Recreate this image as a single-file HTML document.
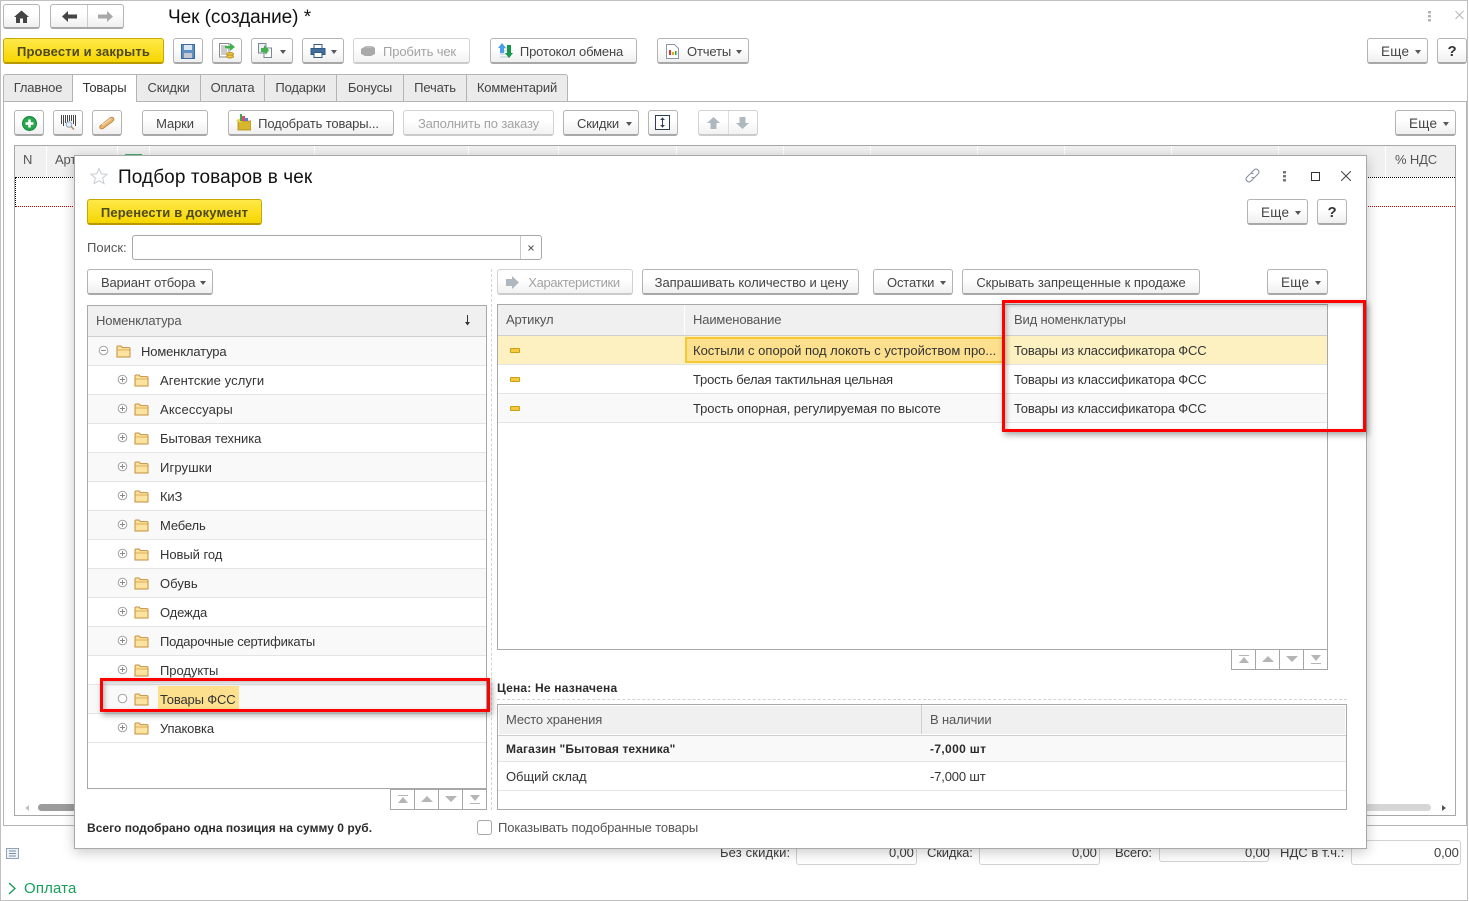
<!DOCTYPE html>
<html lang="ru"><head><meta charset="utf-8"><title>Чек (создание)</title>
<style>
html,body{margin:0;padding:0;background:#fff}
#p{position:relative;width:1469px;height:901px;overflow:hidden;background:#fff;font:13px/16px "Liberation Sans",Arial,sans-serif;color:#4a4a4a;letter-spacing:-.15px}
#p div,#p svg{position:absolute;box-sizing:border-box}
.t{white-space:nowrap;height:16px;color:#3c3c3c}
.d{color:#333}
.g{color:#a3a3a3}
.b{font-weight:bold;color:#2b2b2b;font-size:12px;letter-spacing:0}
.btn{height:26px;border:1px solid #b4b4b4;border-bottom:2px solid #a8a8a8;border-radius:3px;background:linear-gradient(#fff 40%,#efefef);text-align:center;line-height:25px;white-space:nowrap;color:#444}
.dis{border-color:#d2d2d2;border-bottom-color:#cbcbcb;color:#a3a3a3;background:linear-gradient(#fff 40%,#f2f2f2)}
.y{height:26px;border:1px solid #c9a800;border-bottom:2px solid #b89a00;border-radius:3px;background:linear-gradient(#ffe94a,#f6d600);font-weight:bold;color:#4f4a1e;text-align:center;line-height:25px;white-space:nowrap;letter-spacing:.15px}
.ar{width:0;height:0;border:3.5px solid transparent;border-top:4px solid #555;border-bottom:0}
.tab{top:74px;height:28px;background:#ebebeb;border:1px solid #b4b4b4;border-left:0;text-align:center;line-height:26px;color:#444}
.hc{background:#f0f0f0}
.rl{height:1px;background:#e4e4e4}
.pg{border:1px solid #a6a6a6;width:25px;height:21px}
.q{font-size:15px;font-weight:bold;color:#333}
</style></head><body><div id="p">
<svg width="0" height="0" style="position:absolute"><defs>
<symbol id="fo" viewBox="0 0 15 13"><path d="M1 12V2.200Q1 1 2.100 1H5.100L6.500 2.600H13Q14 2.600 14 3.600V12Z" fill="#fde3a0" stroke="#c58f3c"/><path d="M1.500 5H13.500" stroke="#e0ad55"/></symbol>
<symbol id="pl" viewBox="0 0 11 11"><circle cx="5.500" cy="5.500" r="4.300" fill="#fff" stroke="#a2a2a2"/><path d="M3 5.500H8M5.500 3V8" stroke="#8a8a8a"/></symbol>
<symbol id="it" viewBox="0 0 10 5"><rect x=".5" y=".5" width="9" height="4" rx=".5" fill="#f5c93b" stroke="#c9a015"/></symbol>
</defs></svg>

<!-- outer frame -->
<div style="left:0;top:0;width:1468px;height:901px;border:1px solid #c0c0c0"></div>

<!-- top bar -->
<div class="btn" style="left:3px;top:4px;width:37px;height:25px"></div>
<svg style="left:14px;top:10px" width="15" height="13" viewBox="0 0 15 13"><path d="M7.500 .5L15 7H13V13H9V8.500H6V13H2V7H0Z" fill="#444"/></svg>
<div class="btn" style="left:50px;top:4px;width:74px;height:25px"></div>
<div style="left:87px;top:5px;width:1px;height:22px;background:#ccc"></div>
<svg style="left:62px;top:11px" width="15" height="11" viewBox="0 0 15 11"><path d="M0 5.500L6 0V3.500H15V7.500H6V11Z" fill="#444"/></svg>
<svg style="left:98px;top:11px" width="15" height="11" viewBox="0 0 15 11"><path d="M15 5.500L9 0V3.500H0V7.500H9V11Z" fill="#a8a8a8"/></svg>
<div class="t" style="left:168px;top:7px;height:22px;font-size:19px;line-height:22px;color:#111;letter-spacing:-.05px">Чек (создание) *</div>
<svg style="left:1427px;top:10px" width="5" height="13" viewBox="0 0 5 13"><path d="M1 1h3v2.500h-3zM1 5h3v2.500h-3zM1 9h3v2.500h-3z" fill="#b5b5b5"/></svg>
<svg style="left:1455px;top:10px" width="9" height="10" viewBox="0 0 9 10"><path d="M.5 1L8.500 9M8.500 1L.5 9" stroke="#b5b5b5" fill="none"/></svg>

<!-- command bar -->
<div class="y" style="left:3px;top:38px;width:161px">Провести и закрыть</div>
<div class="btn" style="left:173px;top:38px;width:30px"></div>
<svg style="left:181px;top:44px" width="14" height="15" viewBox="0 0 14 15"><path d="M.5.5H13.500V14.500H.5Z" fill="#5f8fc4" stroke="#3d6a9e"/><rect x="3" y="1" width="8" height="5" fill="#d9e6f3"/><rect x="3" y="9" width="8" height="5" fill="#c5c9cf"/></svg>
<div class="btn" style="left:212px;top:38px;width:30px"></div>
<svg style="left:219px;top:43px" width="16" height="17" viewBox="0 0 16 17"><path d="M.5.5H10V14H.5Z" fill="#fff" stroke="#8a8a8a"/><path d="M2 3H8M2 5H8M2 7H8M2 9H8M2 11H7" stroke="#9a9a9a"/><path d="M6 3H11V0L16 4 11 8V5.500H6Z" fill="#3fb14d"/><ellipse cx="11" cy="11" rx="3.500" ry="1.500" fill="#f0c83c" stroke="#b8942a"/><ellipse cx="11" cy="13.500" rx="3.500" ry="1.500" fill="#f0c83c" stroke="#b8942a"/></svg>
<div class="btn" style="left:251px;top:38px;width:42px"></div>
<svg style="left:258px;top:43px" width="17" height="16" viewBox="0 0 17 16"><path d="M.5.5H8V10H.5Z" fill="#eef1f4" stroke="#7b8794"/><path d="M6 5H13.500V14.500H6Z" fill="#fff" stroke="#7b8794"/><path d="M3 5H6V2L11 7 8 11.500 6 9H3Z" fill="#3fb14d"/></svg>
<div class="ar" style="left:280px;top:50px"></div>
<div class="btn" style="left:302px;top:38px;width:42px"></div>
<svg style="left:310px;top:44px" width="16" height="14" viewBox="0 0 16 14"><path d="M4 .5H12V5H4Z" fill="#fff" stroke="#33597f"/><path d="M1 4.500H15V10.500H1Z" fill="#3f6f9e" stroke="#33597f"/><path d="M4 8.500H12V13.500H4Z" fill="#fff" stroke="#33597f"/></svg>
<div class="ar" style="left:331px;top:50px"></div>
<div class="btn dis" style="left:353px;top:38px;width:117px;padding-left:16px">Пробить чек</div>
<svg style="left:360px;top:45px" width="16" height="12" viewBox="0 0 16 12"><path d="M1 4L6 1H12L15 3V9L11 11H5L1 9Z" fill="#a9a9a9"/><path d="M6 2H12" stroke="#ccc"/></svg>
<div class="btn" style="left:490px;top:38px;width:147px;padding-left:16px">Протокол обмена</div>
<svg style="left:497px;top:43px" width="17" height="16" viewBox="0 0 17 16"><path d="M3 5H13M3 8H13M3 11H13M3 14H13" stroke="#b8c7d8"/><path d="M5 0L9 5H7V10H3V5H1Z" fill="#4d9de8"/><path d="M12 15L16 10H14V2H10V10H8Z" fill="#14984a"/></svg>
<div class="btn" style="left:657px;top:38px;width:92px"></div>
<svg style="left:666px;top:44px" width="13" height="15" viewBox="0 0 13 15"><path d="M.5.5H8.500L12.500 4.500V14.500H.5Z" fill="#fff" stroke="#8a97a6"/><path d="M3 6H5V11H3Z" fill="#d9362b"/><path d="M6 8H8V11H6Z" fill="#e2a91e"/><path d="M9 7H10.500V11H9Z" fill="#2a9a46"/></svg>
<div class="t" style="left:687px;top:44px;color:#444">Отчеты</div>
<div class="ar" style="left:736px;top:50px"></div>
<div class="btn" style="left:1367px;top:38px;width:61px;text-align:left;padding-left:13px;font-size:13.500px;letter-spacing:.3px">Еще</div>
<div class="ar" style="left:1415px;top:50px"></div>
<div class="btn q" style="left:1437px;top:38px;width:30px">?</div>

<!-- tabs -->
<div style="left:3px;top:101px;width:1465px;height:1px;background:#b4b4b4"></div>
<div class="tab" style="left:3px;width:70px;border-left:1px solid #b4b4b4;border-radius:3px 0 0 0">Главное</div>
<div class="tab" style="left:72px;width:65px;background:#fff;border-left:1px solid #b4b4b4;border-bottom:0;color:#333">Товары</div>
<div class="tab" style="left:137px;width:64px">Скидки</div>
<div class="tab" style="left:201px;width:64px">Оплата</div>
<div class="tab" style="left:265px;width:72px">Подарки</div>
<div class="tab" style="left:337px;width:67px">Бонусы</div>
<div class="tab" style="left:404px;width:63px">Печать</div>
<div class="tab" style="left:467px;width:101px;border-radius:0 3px 0 0">Комментарий</div>
<div style="left:3px;top:101px;width:1px;height:725px;background:#b4b4b4"></div>
<div style="left:3px;top:825px;width:1464px;height:1px;background:#b4b4b4"></div>
<div style="left:1466px;top:101px;width:1px;height:725px;background:#b4b4b4"></div>

<!-- inner toolbar -->
<div class="btn" style="left:14px;top:110px;width:30px"></div>
<svg style="left:22px;top:116px" width="15" height="15" viewBox="0 0 15 15"><circle cx="7.500" cy="7.500" r="7" fill="#27a64a" stroke="#14823a"/><path d="M7.500 3.500V11.500M3.500 7.500H11.500" stroke="#fff" stroke-width="2.500"/></svg>
<div class="btn" style="left:53px;top:110px;width:30px"></div>
<svg style="left:61px;top:115px" width="15" height="15" viewBox="0 0 15 15"><path d="M.5 0V9M2.500 0V11M4.500 0V8M6.500 0V7M8.500 0V6M10.500 0V6M12.500 0V9M14.500 0V11" stroke="#444"/><circle cx="8" cy="9.500" r="2.800" fill="#e6f0fa" stroke="#8fa9c4"/><path d="M10 11.500L13 14.500" stroke="#b09060" stroke-width="1.500"/></svg>
<div class="btn" style="left:92px;top:110px;width:30px"></div>
<svg style="left:99px;top:115px" width="16" height="15" viewBox="0 0 16 15"><path d="M1 11L11 3Q13 1.500 14.500 3 15.500 5 13.500 6.500L4 13.500Q0 14.500 1 11Z" fill="#e9b872" stroke="#c08a45"/><path d="M3 10L12 3.500" stroke="#fbe6c4" stroke-width="1"/></svg>
<div class="btn" style="left:142px;top:110px;width:66px">Марки</div>
<div class="btn" style="left:228px;top:110px;width:166px;padding-left:15px">Подобрать товары...</div>
<svg style="left:236px;top:114px" width="15" height="17" viewBox="0 0 15 17"><rect x="2" y="7" width="13" height="9" fill="#d8b62c" stroke="#a98c15" stroke-width=".8"/><path d="M0 7L2 5H6V8H2Z" fill="#ecd050"/><rect x="4" y="0" width="2" height="7" fill="#3aa84a"/><rect x="6" y="2" width="3" height="5" fill="#d94d7a"/><rect x="9" y="4" width="3" height="3" fill="#5a7fd6"/></svg>
<div class="btn dis" style="left:403px;top:110px;width:151px">Заполнить по заказу</div>
<div class="btn" style="left:563px;top:110px;width:76px;text-align:left;padding-left:13px">Скидки</div>
<div class="ar" style="left:626px;top:122px"></div>
<div class="btn" style="left:648px;top:110px;width:30px"></div>
<svg style="left:655px;top:115px" width="15" height="15" viewBox="0 0 15 15"><rect x=".5" y=".5" width="14" height="14" fill="#fff" stroke="#2c3e55"/><path d="M7.500 2.500V12.500" stroke="#2c3e55"/><path d="M5 5L7.500 2.500 10 5ZM5 10L7.500 12.500 10 10Z" fill="#2c3e55"/></svg>
<div class="btn dis" style="left:698px;top:110px;width:60px"></div>
<div style="left:728px;top:111px;width:1px;height:23px;background:#dcdcdc"></div>
<svg style="left:707px;top:117px" width="13" height="12" viewBox="0 0 13 12"><path d="M6.500 0L13 6H9.500V12H3.500V6H0Z" fill="#aeb8bf"/></svg>
<svg style="left:736px;top:117px" width="13" height="12" viewBox="0 0 13 12"><path d="M6.500 12L13 6H9.500V0H3.500V6H0Z" fill="#aeb8bf"/></svg>
<div class="btn" style="left:1395px;top:110px;width:61px;text-align:left;padding-left:13px;font-size:13.500px;letter-spacing:.3px">Еще</div>
<div class="ar" style="left:1443px;top:122px"></div>

<!-- background table -->
<div style="left:14px;top:145px;width:1442px;height:671px;border:1px solid #a8a8a8;background:#fff"></div>
<div style="left:15px;top:146px;width:1440px;height:31px;background:#f0f0f0"></div>
<div style="left:46px;top:146px;width:1px;height:31px;background:#fff"></div>
<div style="left:117px;top:146px;width:1px;height:31px;background:#fff"></div>
<div style="left:1385px;top:146px;width:1px;height:31px;background:#fff"></div>
<div style="left:149px;top:146px;width:1px;height:10px;background:#fff"></div>
<div style="left:314px;top:146px;width:1px;height:10px;background:#fff"></div>
<div style="left:468px;top:146px;width:1px;height:10px;background:#fff"></div>
<div style="left:558px;top:146px;width:1px;height:10px;background:#fff"></div>
<div style="left:676px;top:146px;width:1px;height:10px;background:#fff"></div>
<div style="left:783px;top:146px;width:1px;height:10px;background:#fff"></div>
<div style="left:870px;top:146px;width:1px;height:10px;background:#fff"></div>
<div style="left:977px;top:146px;width:1px;height:10px;background:#fff"></div>
<div style="left:1064px;top:146px;width:1px;height:10px;background:#fff"></div>
<div style="left:1171px;top:146px;width:1px;height:10px;background:#fff"></div>
<div style="left:1278px;top:146px;width:1px;height:10px;background:#fff"></div>
<div class="t" style="left:23px;top:152px;color:#555">N</div>
<div class="t" style="left:55px;top:152px;color:#555">Артикул</div>
<div style="left:125px;top:154px;width:17px;height:2px;background:#3fb26a"></div>
<div class="t" style="left:1395px;top:152px;color:#555">% НДС</div>
<div style="left:15px;top:177px;width:1440px;height:1px;border-top:1px dotted #000"></div>
<div style="left:15px;top:206px;width:1440px;height:1px;border-top:1px dotted #c00000"></div>
<div style="left:15px;top:177px;width:1px;height:30px;border-left:1px dotted #000"></div>
<div style="left:38px;top:804px;width:1393px;height:7px;border-radius:4px;background:#d6d6d6"></div>
<div style="left:38px;top:804px;width:60px;height:7px;border-radius:4px;background:#9c9c9c"></div>
<div style="left:25px;top:805px;border:3px solid transparent;border-right:4px solid #c4c4c4;border-left:0"></div>
<div style="left:1442px;top:805px;border:3px solid transparent;border-left:4px solid #555;border-right:0"></div>

<!-- totals behind modal -->
<div class="t" style="left:720px;top:845px;letter-spacing:.15px">Без скидки:</div>
<div style="left:796px;top:835px;width:121px;height:30px;border:1px solid #d2d2d2;border-radius:3px"></div>
<div class="t" style="left:889px;top:845px">0,00</div>
<div class="t" style="left:927px;top:845px">Скидка:</div>
<div style="left:979px;top:835px;width:121px;height:30px;border:1px solid #d2d2d2;border-radius:3px"></div>
<div class="t" style="left:1072px;top:845px">0,00</div>
<div class="t" style="left:1115px;top:845px">Всего:</div>
<div style="left:1159px;top:835px;width:110px;height:27px;border:1px solid #d2d2d2;border-radius:3px"></div>
<div class="t" style="left:1245px;top:845px">0,00</div>
<div class="t" style="left:1280px;top:845px;letter-spacing:.05px">НДС в т.ч.:</div>
<div style="left:1351px;top:840px;width:110px;height:25px;border:1px solid #d2d2d2;border-radius:3px"></div>
<div class="t" style="left:1434px;top:845px">0,00</div>
<svg style="left:6px;top:848px" width="13" height="11" viewBox="0 0 13 11"><rect x=".5" y=".5" width="12" height="10" fill="#eef2f6" stroke="#8fa3b8"/><path d="M3 3H10M3 5.500H10M3 8H10" stroke="#7a8fa5"/></svg>
<svg style="left:8px;top:882px" width="9" height="13" viewBox="0 0 9 13"><path d="M1 1L7 6.500 1 12" fill="none" stroke="#109a55" stroke-width="1.300"/></svg>
<div class="t" style="left:24px;top:881px;font-size:15px;color:#16a05c;letter-spacing:.15px">Оплата</div>

<!-- modal -->
<div style="left:74px;top:155px;width:1293px;height:694px;background:#fff;border:1px solid #a8a8a8;box-shadow:0 3px 12px rgba(0,0,0,.22)"></div>
<svg style="left:90px;top:167px" width="18" height="18" viewBox="0 0 18 18"><path d="M9 1.500L11.200 6.800 17 7.300 12.600 11 14 16.600 9 13.700 4 16.600 5.400 11 1 7.300 6.800 6.800Z" fill="#fff" stroke="#c6ccd2"/></svg>
<div class="t" style="left:118px;top:167px;height:22px;font-size:19px;line-height:22px;color:#111;letter-spacing:.1px">Подбор товаров в чек</div>
<svg style="left:1244px;top:167px" width="17" height="17" viewBox="0 0 17 17"><path d="M7 6L10 3Q12 1 14 3 16 5 14 7L11 10Q9 11.500 7.500 10M10 11L7 14Q5 16 3 14 1 12 3 10L6 7Q8 5.500 9.500 7" fill="none" stroke="#7f8a96"/></svg>
<svg style="left:1282px;top:170px" width="5" height="13" viewBox="0 0 5 13"><path d="M1 1h3v2.500h-3zM1 5h3v2.500h-3zM1 9h3v2.500h-3z" fill="#777"/></svg>
<div style="left:1311px;top:172px;width:9px;height:9px;border:1px solid #333"></div>
<svg style="left:1341px;top:171px" width="10" height="10" viewBox="0 0 10 10"><path d="M0 0L10 10M10 0L0 10" stroke="#444" fill="none"/></svg>

<div class="y" style="left:87px;top:199px;width:175px">Перенести в документ</div>
<div class="btn" style="left:1247px;top:199px;width:61px;text-align:left;padding-left:13px;font-size:13.500px;letter-spacing:.3px">Еще</div>
<div class="ar" style="left:1295px;top:211px"></div>
<div class="btn q" style="left:1317px;top:199px;width:30px">?</div>

<div class="t" style="left:87px;top:240px;color:#555;letter-spacing:0">Поиск:</div>
<div style="left:132px;top:235px;width:410px;height:25px;border:1px solid #a8a8a8;border-radius:3px;background:#fff"></div>
<div style="left:520px;top:236px;width:1px;height:23px;background:#c8c8c8"></div>
<svg style="left:528px;top:245px" width="6" height="6" viewBox="0 0 6 6"><path d="M.5.5L5.500 5.500M5.500.5L.5 5.500" stroke="#555" fill="none"/></svg>

<div class="btn" style="left:87px;top:269px;width:126px;text-align:left;padding-left:13px">Вариант отбора</div>
<div class="ar" style="left:200px;top:281px"></div>

<!-- splitter -->
<div style="left:491px;top:269px;width:1px;height:541px;border-left:1px dashed #d4d4d4"></div>

<!-- tree -->
<div style="left:87px;top:305px;width:400px;height:484px;border:1px solid #a8a8a8;background:#fff"></div>
<div class="hc" style="left:88px;top:306px;width:398px;height:30px"></div>
<div style="left:88px;top:336px;width:398px;height:1px;background:#cfcfcf"></div>
<div class="t" style="left:96px;top:313px;color:#555">Номенклатура</div>
<svg style="left:464px;top:315px" width="7" height="11" viewBox="0 0 7 11"><path d="M3.500 0V9" stroke="#333"/><path d="M1 7L3.500 10.500 6 7Z" fill="#333"/></svg>

<div style="left:88px;top:337px;width:398px;height:28px;background:#f9f9f9"></div>
<div style="left:88px;top:395px;width:398px;height:28px;background:#f9f9f9"></div>
<div style="left:88px;top:453px;width:398px;height:28px;background:#f9f9f9"></div>
<div style="left:88px;top:511px;width:398px;height:28px;background:#f9f9f9"></div>
<div style="left:88px;top:569px;width:398px;height:28px;background:#f9f9f9"></div>
<div style="left:88px;top:627px;width:398px;height:28px;background:#f9f9f9"></div>
<div style="left:88px;top:685px;width:398px;height:28px;background:#f9f9f9"></div>
<div class="rl" style="left:88px;top:365px;width:398px"></div>
<div class="rl" style="left:88px;top:394px;width:398px"></div>
<div class="rl" style="left:88px;top:423px;width:398px"></div>
<div class="rl" style="left:88px;top:452px;width:398px"></div>
<div class="rl" style="left:88px;top:481px;width:398px"></div>
<div class="rl" style="left:88px;top:510px;width:398px"></div>
<div class="rl" style="left:88px;top:539px;width:398px"></div>
<div class="rl" style="left:88px;top:568px;width:398px"></div>
<div class="rl" style="left:88px;top:597px;width:398px"></div>
<div class="rl" style="left:88px;top:626px;width:398px"></div>
<div class="rl" style="left:88px;top:655px;width:398px"></div>
<div class="rl" style="left:88px;top:684px;width:398px"></div>
<div class="rl" style="left:88px;top:713px;width:398px"></div>
<div class="rl" style="left:88px;top:742px;width:398px"></div>

<svg style="left:98px;top:345px" width="11" height="11" viewBox="0 0 11 11"><circle cx="5.500" cy="5.500" r="4.300" fill="#fff" stroke="#a2a2a2"/><path d="M3 5.500H8" stroke="#8a8a8a"/></svg>
<svg style="left:116px;top:345px" width="15" height="13"><use href="#fo"/></svg>
<div class="t d" style="left:141px;top:344px">Номенклатура</div>

<svg style="left:117px;top:374px" width="11" height="11"><use href="#pl"/></svg><svg style="left:134px;top:374px" width="15" height="13"><use href="#fo"/></svg><div class="t d" style="left:160px;top:373px;letter-spacing:.1px">Агентские услуги</div>
<svg style="left:117px;top:403px" width="11" height="11"><use href="#pl"/></svg><svg style="left:134px;top:403px" width="15" height="13"><use href="#fo"/></svg><div class="t d" style="left:160px;top:402px;letter-spacing:.15px">Аксессуары</div>
<svg style="left:117px;top:432px" width="11" height="11"><use href="#pl"/></svg><svg style="left:134px;top:432px" width="15" height="13"><use href="#fo"/></svg><div class="t d" style="left:160px;top:431px;letter-spacing:-.08px">Бытовая техника</div>
<svg style="left:117px;top:461px" width="11" height="11"><use href="#pl"/></svg><svg style="left:134px;top:461px" width="15" height="13"><use href="#fo"/></svg><div class="t d" style="left:160px;top:460px;letter-spacing:.13px">Игрушки</div>
<svg style="left:117px;top:490px" width="11" height="11"><use href="#pl"/></svg><svg style="left:134px;top:490px" width="15" height="13"><use href="#fo"/></svg><div class="t d" style="left:160px;top:489px">КиЗ</div>
<svg style="left:117px;top:519px" width="11" height="11"><use href="#pl"/></svg><svg style="left:134px;top:519px" width="15" height="13"><use href="#fo"/></svg><div class="t d" style="left:160px;top:518px">Мебель</div>
<svg style="left:117px;top:548px" width="11" height="11"><use href="#pl"/></svg><svg style="left:134px;top:548px" width="15" height="13"><use href="#fo"/></svg><div class="t d" style="left:160px;top:547px;letter-spacing:-.05px">Новый год</div>
<svg style="left:117px;top:577px" width="11" height="11"><use href="#pl"/></svg><svg style="left:134px;top:577px" width="15" height="13"><use href="#fo"/></svg><div class="t d" style="left:160px;top:576px;letter-spacing:.05px">Обувь</div>
<svg style="left:117px;top:606px" width="11" height="11"><use href="#pl"/></svg><svg style="left:134px;top:606px" width="15" height="13"><use href="#fo"/></svg><div class="t d" style="left:160px;top:605px">Одежда</div>
<svg style="left:117px;top:635px" width="11" height="11"><use href="#pl"/></svg><svg style="left:134px;top:635px" width="15" height="13"><use href="#fo"/></svg><div class="t d" style="left:160px;top:634px;letter-spacing:-.2px">Подарочные сертификаты</div>
<svg style="left:117px;top:664px" width="11" height="11"><use href="#pl"/></svg><svg style="left:134px;top:664px" width="15" height="13"><use href="#fo"/></svg><div class="t d" style="left:160px;top:663px;letter-spacing:-.05px">Продукты</div>
<svg style="left:117px;top:693px" width="11" height="11" viewBox="0 0 11 11"><circle cx="5.500" cy="5.500" r="4.300" fill="#fff" stroke="#a2a2a2"/></svg><svg style="left:134px;top:693px" width="15" height="13"><use href="#fo"/></svg>
<div style="left:158px;top:686px;width:81px;height:24px;background:#fde08e"></div>
<div class="t d" style="left:160px;top:692px">Товары ФСС</div>
<svg style="left:117px;top:722px" width="11" height="11"><use href="#pl"/></svg><svg style="left:134px;top:722px" width="15" height="13"><use href="#fo"/></svg><div class="t d" style="left:160px;top:721px">Упаковка</div>

<!-- tree pager -->
<div class="pg" style="left:390px;top:789px"></div><div class="pg" style="left:414px;top:789px"></div><div class="pg" style="left:438px;top:789px"></div><div class="pg" style="left:462px;top:789px"></div>
<svg style="left:396px;top:795px" width="14" height="9" viewBox="0 0 14 9"><path d="M2 0H12V1H2ZM7 2L12 8H2Z" fill="#b5b5b5"/></svg>
<svg style="left:421px;top:796px" width="12" height="7" viewBox="0 0 12 7"><path d="M6 0L12 6H0Z" fill="#b5b5b5"/></svg>
<svg style="left:445px;top:796px" width="12" height="7" viewBox="0 0 12 7"><path d="M6 6L12 0H0Z" fill="#b5b5b5"/></svg>
<svg style="left:468px;top:795px" width="14" height="9" viewBox="0 0 14 9"><path d="M2 8H12V9H2ZM7 6L12 0H2Z" fill="#b5b5b5"/></svg>

<!-- right buttons -->
<div class="btn dis" style="left:497px;top:269px;width:136px;padding-left:18px;letter-spacing:-.35px">Характеристики</div>
<svg style="left:506px;top:276px" width="13" height="13" viewBox="0 0 13 13"><path d="M0 3H6V0L13 6.500 6 13V10H0Z" fill="#b0b8bf"/></svg>
<div class="btn" style="left:642px;top:269px;width:217px;letter-spacing:-.05px;padding-left:2px">Запрашивать количество и цену</div>
<div class="btn" style="left:873px;top:269px;width:80px;text-align:left;padding-left:13px">Остатки</div>
<div class="ar" style="left:940px;top:281px"></div>
<div class="btn" style="left:962px;top:269px;width:238px;letter-spacing:-.02px">Скрывать запрещенные к продаже</div>
<div class="btn" style="left:1267px;top:269px;width:61px;text-align:left;padding-left:13px;font-size:13.500px;letter-spacing:.3px">Еще</div>
<div class="ar" style="left:1315px;top:281px"></div>

<!-- grid -->
<div style="left:497px;top:304px;width:831px;height:346px;border:1px solid #a8a8a8;background:#fff"></div>
<div class="hc" style="left:498px;top:305px;width:829px;height:30px"></div>
<div style="left:684px;top:305px;width:1px;height:30px;background:#fff"></div>
<div style="left:498px;top:335px;width:829px;height:1px;background:#cfcfcf"></div>
<div class="t" style="left:506px;top:312px;color:#555">Артикул</div>
<div class="t" style="left:693px;top:312px;color:#555">Наименование</div>
<div class="t" style="left:1014px;top:312px;color:#555">Вид номенклатуры</div>
<div style="left:498px;top:336px;width:829px;height:28px;background:#fdf1c2"></div>
<div style="left:685px;top:337px;width:320px;height:26px;background:#fde08e;border:2px solid #f6c834;border-right:0"></div>
<div class="rl" style="left:498px;top:364px;width:829px"></div>
<div style="left:498px;top:394px;width:829px;height:28px;background:#f9f9f9"></div>
<div class="rl" style="left:498px;top:393px;width:829px"></div>
<div class="rl" style="left:498px;top:422px;width:829px"></div>
<svg style="left:510px;top:348px" width="10" height="5"><use href="#it"/></svg>
<svg style="left:510px;top:377px" width="10" height="5"><use href="#it"/></svg>
<svg style="left:510px;top:406px" width="10" height="5"><use href="#it"/></svg>
<div class="t d" style="left:693px;top:343px;letter-spacing:0">Костыли с опорой под локоть с устройством про...</div>
<div class="t d" style="left:693px;top:372px;letter-spacing:-.18px">Трость белая тактильная цельная</div>
<div class="t d" style="left:693px;top:401px;letter-spacing:-.07px">Трость опорная, регулируемая по высоте</div>
<div class="t d" style="left:1014px;top:343px">Товары из классификатора ФСС</div>
<div class="t d" style="left:1014px;top:372px">Товары из классификатора ФСС</div>
<div class="t d" style="left:1014px;top:401px">Товары из классификатора ФСС</div>

<!-- grid pager -->
<div class="pg" style="left:1231px;top:649px"></div><div class="pg" style="left:1255px;top:649px"></div><div class="pg" style="left:1279px;top:649px"></div><div class="pg" style="left:1303px;top:649px"></div>
<svg style="left:1237px;top:655px" width="14" height="9" viewBox="0 0 14 9"><path d="M2 0H12V1H2ZM7 2L12 8H2Z" fill="#b5b5b5"/></svg>
<svg style="left:1262px;top:656px" width="12" height="7" viewBox="0 0 12 7"><path d="M6 0L12 6H0Z" fill="#b5b5b5"/></svg>
<svg style="left:1286px;top:656px" width="12" height="7" viewBox="0 0 12 7"><path d="M6 6L12 0H0Z" fill="#b5b5b5"/></svg>
<svg style="left:1309px;top:655px" width="14" height="9" viewBox="0 0 14 9"><path d="M2 8H12V9H2ZM7 6L12 0H2Z" fill="#b5b5b5"/></svg>

<div class="t b" style="left:497px;top:680px;letter-spacing:.2px">Цена: Не назначена</div>
<div style="left:497px;top:699px;width:850px;height:1px;border-top:1px dashed #d4d4d4"></div>

<!-- stock table -->
<div style="left:497px;top:704px;width:850px;height:106px;border:1px solid #a8a8a8;background:#fff"></div>
<div class="hc" style="left:499px;top:706px;width:846px;height:28px"></div>
<div style="left:921px;top:705px;width:1px;height:29px;background:#cfcfcf"></div>
<div style="left:498px;top:735px;width:848px;height:1px;background:#cfcfcf"></div>
<div style="left:498px;top:736px;width:848px;height:25px;background:#f9f9f9"></div>
<div class="rl" style="left:498px;top:761px;width:848px"></div>
<div class="rl" style="left:498px;top:790px;width:848px"></div>
<div class="t" style="left:506px;top:712px;color:#555">Место хранения</div>
<div class="t" style="left:930px;top:712px;color:#555">В наличии</div>
<div class="t b" style="left:506px;top:741px;letter-spacing:.12px">Магазин "Бытовая техника"</div>
<div class="t b" style="left:930px;top:741px;letter-spacing:.35px">-7,000 шт</div>
<div class="t d" style="left:506px;top:769px;letter-spacing:-.05px">Общий склад</div>
<div class="t d" style="left:930px;top:769px">-7,000 шт</div>

<div class="t b" style="left:87px;top:820px;letter-spacing:.03px">Всего подобрано одна позиция на сумму 0 руб.</div>
<div style="left:477px;top:820px;width:15px;height:15px;border:1px solid #a8a8a8;border-radius:3px;background:#fff"></div>
<div class="t" style="left:498px;top:820px;color:#555;letter-spacing:-.13px">Показывать подобранные товары</div>

<!-- red annotations -->
<div style="left:1002px;top:300px;width:364px;height:132px;border:3px solid #f00;box-shadow:2px 3px 6px rgba(0,0,0,.35),inset 2px 2px 5px rgba(0,0,0,.25)"></div>
<div style="left:100px;top:678px;width:390px;height:34px;border:3px solid #f00;box-shadow:2px 3px 6px rgba(0,0,0,.35),inset 2px 2px 5px rgba(0,0,0,.25)"></div>
</div></body></html>
